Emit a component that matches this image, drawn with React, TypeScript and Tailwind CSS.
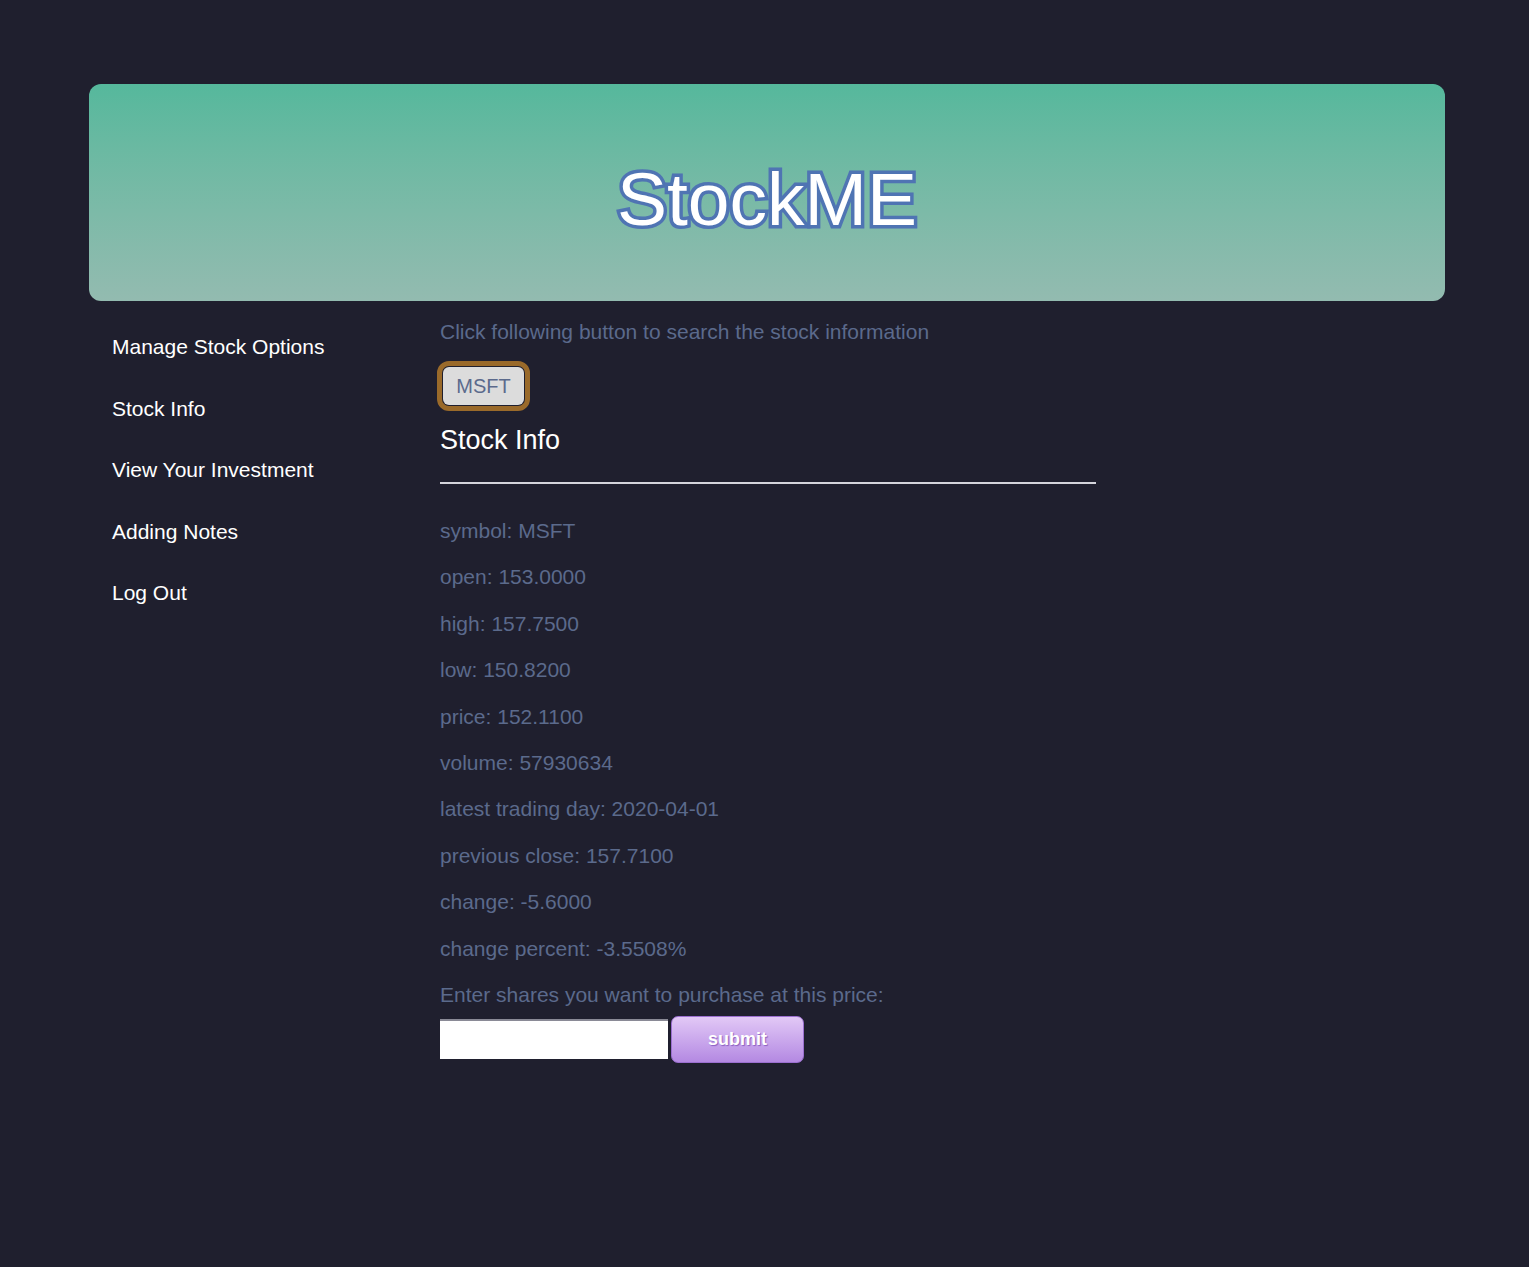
export default function App() {
  const info: [string, string][] = [
    ["symbol", "MSFT"],
    ["open", "153.0000"],
    ["high", "157.7500"],
    ["low", "150.8200"],
    ["price", "152.1100"],
    ["volume", "57930634"],
    ["latest trading day", "2020-04-01"],
    ["previous close", "157.7100"],
    ["change", "-5.6000"],
    ["change percent", "-3.5508%"],
  ];
  const nav = ["Manage Stock Options", "Stock Info", "View Your Investment", "Adding Notes", "Log Out"];

  return (
    <div className="min-h-screen bg-[#1f1f2e] pt-[84px] font-['Liberation_Sans',Arial,sans-serif]">
      <header className="ml-[89px] mr-[84px] h-[217px] rounded-[12px] bg-gradient-to-b from-[#55b89c] to-[#93bbb0] flex items-center justify-center pt-[13px]">
        <h1 className="text-[75px] leading-none text-white [-webkit-text-stroke:7px_#4f74b3] [paint-order:stroke_fill]">
          StockME
        </h1>
      </header>

      <div className="flex ml-[89px]">
        <nav className="w-[351px] pl-[23px] pt-[33px] flex flex-col gap-[35.5px]">
          {nav.map((n) => (
            <a key={n} href="#" className="text-white text-[21px] leading-[26px]">
              {n}
            </a>
          ))}
        </nav>

        <main className="pt-[18px] text-[#5b6a8c] text-[21px] leading-[26px]">
          <p>Click following button to search the stock information</p>
          <button className="mt-[22px] ml-[3px] w-[81px] h-[38px] rounded-[6px] bg-[#dcdcdc] text-[#5b6a8c] text-[20px] outline-[5px] outline-solid outline-[#9a6a2a] outline-offset-[1px]">
            MSFT
          </button>
          <h2 className="mt-[22px] text-white text-[27px] leading-[26px]">Stock Info</h2>
          <div className="mt-[29px] w-[656px] h-[2px] bg-[#d4d4dc]" />
          <div className="mt-[34px] flex flex-col gap-[20.4px]">
            {info.map(([k, v]) => (
              <p key={k}>
                {k}: {v}
              </p>
            ))}
            <p>Enter shares you want to purchase at this price:</p>
          </div>
          <div className="mt-[8px] flex items-center gap-[3px]">
            <input className="w-[228px] h-[40px] bg-white border-t-2 border-[#8a8a96] outline-none px-2 text-black" />
            <button className="w-[133px] h-[47px] rounded-[7px] border border-[#9b6fd0] bg-gradient-to-b from-[#e2c8f6] to-[#b489e2] text-white font-bold text-[18px] [text-shadow:1px_1px_1px_#8a5fc0]">
              submit
            </button>
          </div>
        </main>
      </div>
    </div>
  );
}
